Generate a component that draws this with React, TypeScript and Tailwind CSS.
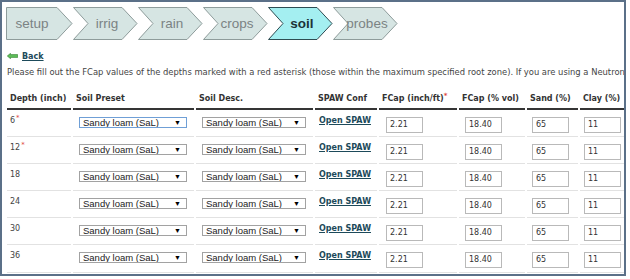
import React from "react";

const tabs = ["setup", "irrig", "rain", "crops", "soil", "probes"];
const depths = ["6", "12", "18", "24", "30", "36"];
const headers = [
  "Depth (inch)",
  "Soil Preset",
  "Soil Desc.",
  "SPAW Conf",
  "FCap (inch/ft)",
  "FCap (% vol)",
  "Sand (%)",
  "Clay (%)",
];

const verdana = "font-['DejaVu_Sans',Verdana,sans-serif]";
const grid =
  "grid grid-cols-[64px_121px_117px_62px_78px_66px_51px_44px] gap-x-[2px]";

function Tab({ label, first, active }: { label: string; first: boolean; active: boolean }) {
  const pts = first
    ? "0.5,0.5 51,0.5 66,16.5 51,32.5 0.5,32.5"
    : "0.5,0.5 49,0.5 64,16.5 49,32.5 0.5,32.5 15,16.5";
  return (
    <div className={`relative h-[33px] shrink-0 flex items-center ${first ? "w-[67px]" : "w-[65px]"}`}>
      <svg className="absolute left-0 top-0 overflow-visible" width={first ? 67 : 65} height={33}>
        <polygon
          points={pts}
          fill={active ? "#a4eff1" : "#d6e5e3"}
          stroke={active ? "#2e4c52" : "#8e9c9b"}
          strokeWidth={1}
        />
      </svg>
      <span
        className={`relative flex justify-center font-['Liberation_Sans',Arial,sans-serif] text-[13.5px] leading-[16px] ${
          first ? "w-[52px]" : "ml-[12px] w-[44px]"
        } ${active ? "font-bold text-[#1c3337]" : "text-[#7b8383]"}`}
      >
        {label}
      </span>
    </div>
  );
}

function FakeSelect({ focus, w }: { focus: boolean; w: string }) {
  return (
    <div
      className={`mt-[7px] h-[11px] ${w} flex items-center justify-between bg-white border ${
        focus ? "border-[#6f9fd6]" : "border-[#a2a2a2]"
      } pl-[3px] pr-[5px] font-['Liberation_Sans',Arial,sans-serif] text-[9.5px] leading-[9px] text-[#222] overflow-hidden`}
    >
      <span className="whitespace-nowrap">Sandy loam (SaL)</span>
      <span className="text-[7px] leading-[7px] text-black">▼</span>
    </div>
  );
}

function Num({ v }: { v: string }) {
  return (
    <input
      readOnly
      value={v}
      className={`mt-[6px] h-[16px] w-[37px] border border-[#b9b9b9] bg-white px-[3px] ${verdana} text-[8px] text-[#333] outline-none`}
    />
  );
}

export default function App() {
  return (
    <div className="w-[630px] h-[279px] bg-white">
      <div className="w-[626px] h-[276px] border-2 border-[#5b7088] overflow-hidden bg-white">
        <div className="ml-[4px] mt-[5px] flex">
          {tabs.map((t, i) => (
            <Tab key={t} label={t} first={i === 0} active={t === "soil"} />
          ))}
        </div>

        <div className={`ml-[5px] mt-[11px] h-[12px] flex items-center gap-[4px] ${verdana}`}>
          <svg width="11" height="6" viewBox="0 0 11 6" className="-mt-[3px]">
            <polygon
              points="0.3,3 3.5,0.3 3.5,1.6 10.7,1.6 10.7,4.4 3.5,4.4 3.5,5.7"
              fill="#5fbf5a"
              stroke="#2f7d2c"
              strokeWidth="0.6"
            />
          </svg>
          <a className="text-[8px] leading-[12px] font-bold underline text-[#1d4a5a]">Back</a>
        </div>

        <div className={`ml-[5px] mt-[3px] h-[12px] whitespace-nowrap ${verdana} text-[8.4px] leading-[12px] text-[#444]`}>
          Please fill out the FCap values of the depths marked with a red asterisk (those within the maximum specified root zone). If you are using a Neutron
        </div>

        <div className={`ml-[5px] mt-[11px] ${grid} ${verdana}`}>
          {headers.map((h) => (
            <div
              key={h}
              className="h-[21px] border-b-2 border-[#353535] pl-[3px] pt-[4px] text-[8px] leading-[12px] font-bold text-[#333] whitespace-nowrap overflow-hidden"
            >
              {h}
              {h === "FCap (inch/ft)" && <sup className="text-[#e0463d] text-[7px]">*</sup>}
            </div>
          ))}
        </div>

        {depths.map((d, i) => (
          <div key={d} className={`ml-[5px] ${grid} ${verdana}`}>
            <div className={`${i === 5 ? "h-[28px]" : "h-[27px]"} border-b border-[#e2e2e2] pl-[3px] pt-[4px] text-[8px] leading-[13px] text-[#444]`}>
              {d}
              {i < 2 && <sup className="text-[#e0463d] text-[7px] ml-[1px]">*</sup>}
            </div>
            <div className="border-b border-[#e2e2e2] pl-[6px]">
              <FakeSelect focus={i === 0} w="w-[108px]" />
            </div>
            <div className="border-b border-[#e2e2e2] pl-[6px]">
              <FakeSelect focus={false} w="w-[104px]" />
            </div>
            <div className="border-b border-[#e2e2e2] pl-[4px] pt-[4px] text-[8px] leading-[13px]">
              <a className="font-bold underline text-[#1d4a5a] whitespace-nowrap">Open SPAW</a>
            </div>
            <div className="border-b border-[#e2e2e2] pl-[7px]">
              <Num v="2.21" />
            </div>
            <div className="border-b border-[#e2e2e2] pl-[6px]">
              <Num v="18.40" />
            </div>
            <div className="border-b border-[#e2e2e2] pl-[5px]">
              <Num v="65" />
            </div>
            <div className="border-b border-[#e2e2e2] pl-[4px]">
              <Num v="11" />
            </div>
          </div>
        ))}
      </div>
    </div>
  );
}
